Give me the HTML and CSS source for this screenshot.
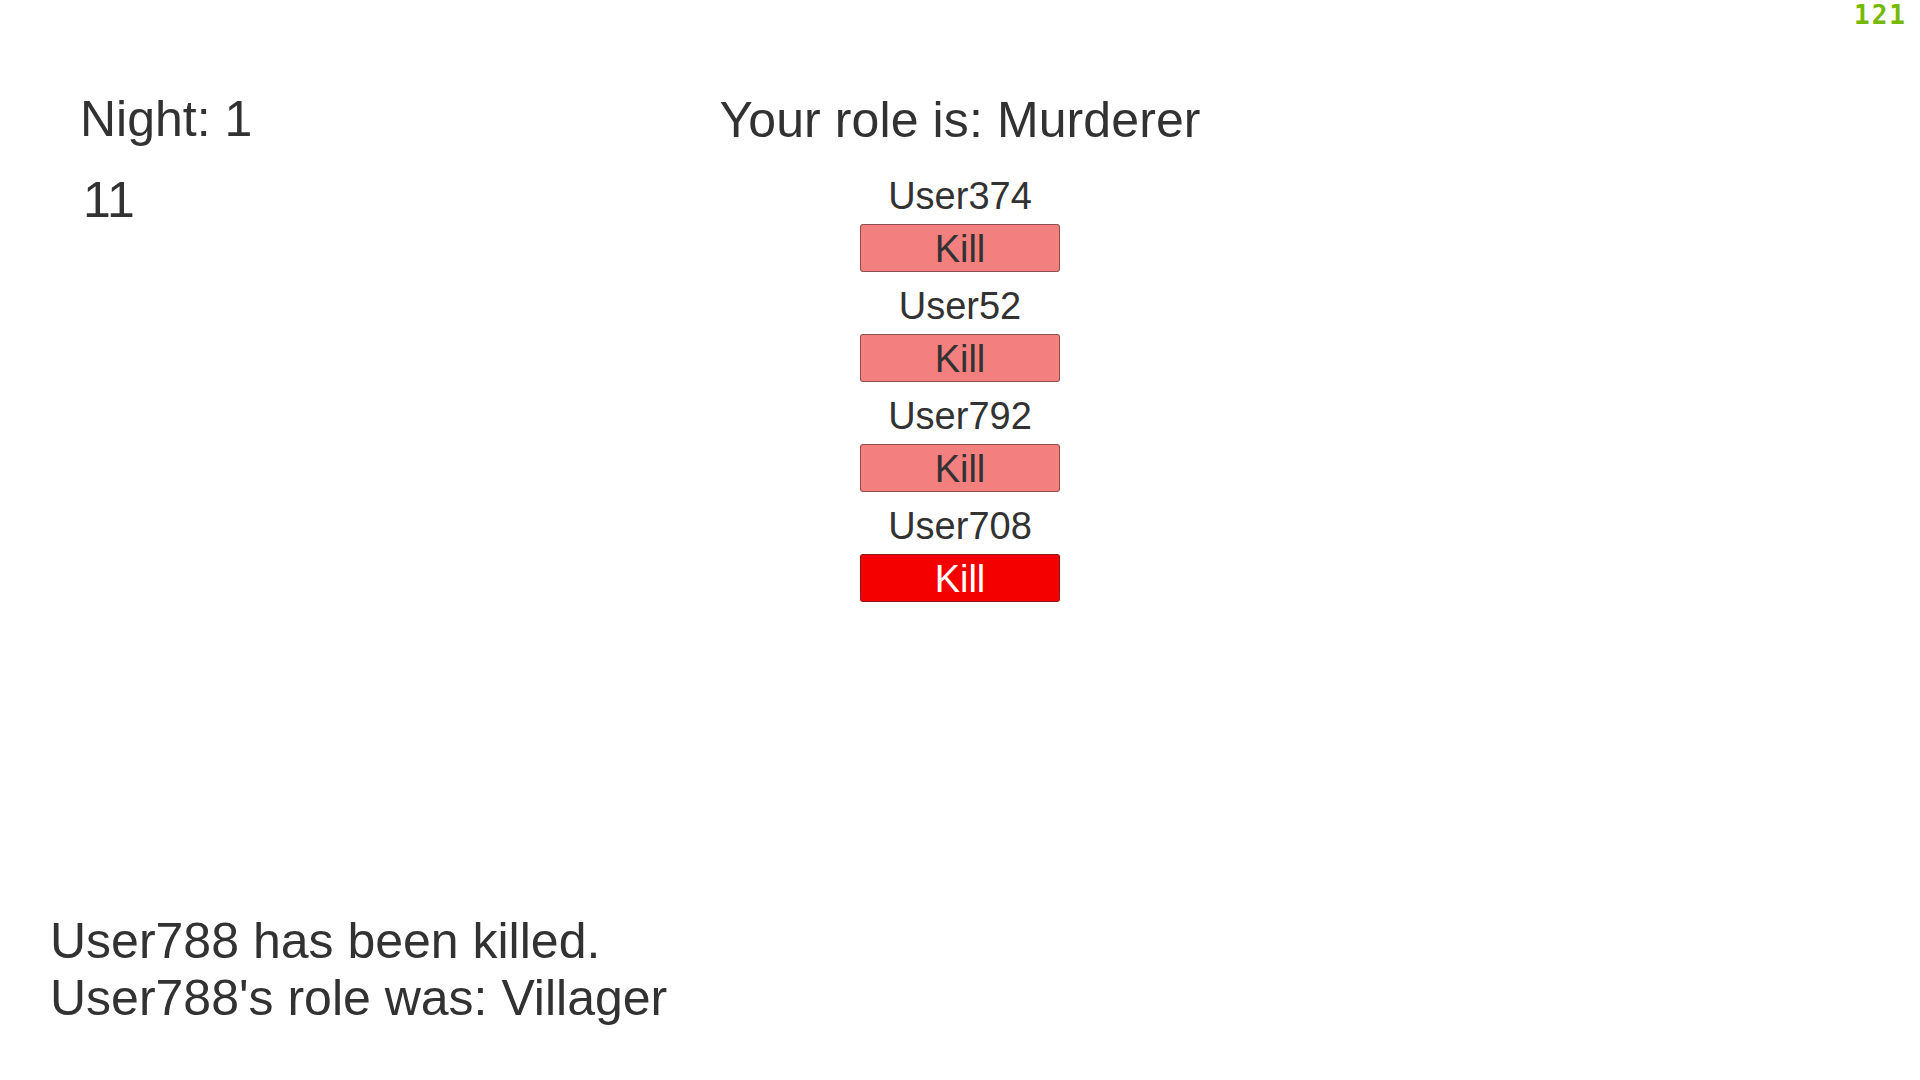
FILE: index.html
```html
<!DOCTYPE html>
<html lang="en">
<head>
<meta charset="utf-8">
<title>Night</title>
<link rel="stylesheet" href="styles.css">
</head>
<body>
<div class="screen">
  <div class="fps">121</div>
  <div class="top">
    <div class="status">
      <div class="night">Night: 1</div>
      <div class="timer">11</div>
    </div>
    <div class="center">
      <div class="role">Your role is: Murderer</div>
      <div class="players">
        <div class="player">
          <div class="name">User374</div>
          <button class="kill">Kill</button>
        </div>
        <div class="player">
          <div class="name">User52</div>
          <button class="kill">Kill</button>
        </div>
        <div class="player">
          <div class="name">User792</div>
          <button class="kill">Kill</button>
        </div>
        <div class="player">
          <div class="name">User708</div>
          <button class="kill kill-selected">Kill</button>
        </div>
      </div>
    </div>
    <div class="spacer"></div>
  </div>
  <div class="log">
    <div class="log-line">User788 has been killed.</div>
    <div class="log-line">User788's role was: Villager</div>
  </div>
</div>
</body>
</html>
```

FILE: styles.css
```css
html, body {
  margin: 0;
  padding: 0;
  background: #ffffff;
}

body {
  font-family: "Liberation Sans", Arial, sans-serif;
  color: #323232;
}

.screen {
  position: relative;
  width: 1920px;
  height: 1080px;
  display: flex;
  flex-direction: column;
  box-sizing: border-box;
  padding-top: 91px;
  padding-bottom: 53px;
  overflow: hidden;
}

.fps {
  position: absolute;
  top: 0;
  right: 13px;
  font-family: "DejaVu Sans Mono", monospace;
  font-weight: bold;
  font-size: 26px;
  line-height: 31px;
  letter-spacing: 2px;
  color: #76b900;
}

.top {
  display: grid;
  grid-template-columns: 1fr auto 1fr;
  align-items: start;
}

.status {
  padding-left: 80px;
  font-size: 50px;
  line-height: 57px;
}

.timer {
  margin-top: 24px;
  padding-left: 3px;
}

.center {
  display: flex;
  flex-direction: column;
  align-items: center;
}

.role {
  font-size: 50px;
  line-height: 57px;
  margin-top: 1px;
  letter-spacing: 0.1px;
  white-space: nowrap;
}

.players {
  margin-top: 13px;
  display: flex;
  flex-direction: column;
  align-items: center;
}

.player {
  display: flex;
  flex-direction: column;
  align-items: center;
}

.name {
  font-size: 38px;
  line-height: 55px;
  padding-top: 7px;
}

.kill {
  display: block;
  box-sizing: border-box;
  width: 200px;
  height: 48px;
  margin: 0;
  padding: 2px 0 0 0;
  border: 1px solid rgba(60, 40, 40, 0.55);
  border-radius: 3px;
  background: #f47f7f;
  color: #323232;
  font-family: "Liberation Sans", Arial, sans-serif;
  font-size: 38px;
  line-height: 44px;
  text-align: center;
}

.kill-selected {
  background: #f50000;
  color: #ffffff;
}

.log {
  margin-top: auto;
  padding-left: 50px;
  font-size: 50px;
  line-height: 57px;
}
```
